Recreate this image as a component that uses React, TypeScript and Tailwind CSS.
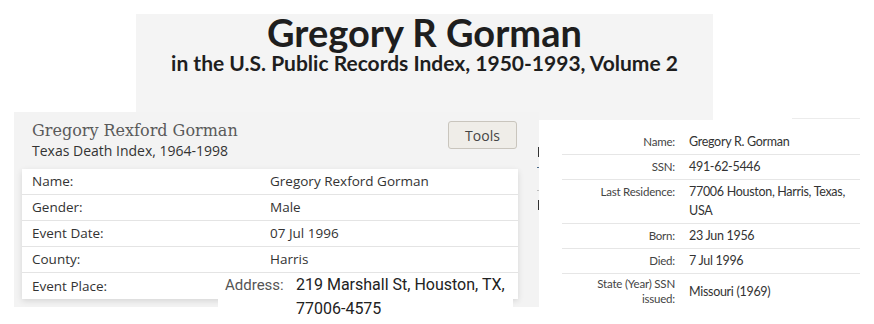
import React from "react";

type Row = { label: string; value: string };

const deathRows: Row[] = [
  { label: "Name:", value: "Gregory Rexford Gorman" },
  { label: "Gender:", value: "Male" },
  { label: "Event Date:", value: "07 Jul 1996" },
  { label: "County:", value: "Harris" },
  { label: "Event Place:", value: "" },
];

const recordRows: { label: string[]; value: string[] }[] = [
  { label: ["Name:"], value: ["Gregory R. Gorman"] },
  { label: ["SSN:"], value: ["491-62-5446"] },
  { label: ["Last Residence:"], value: ["77006 Houston, Harris, Texas,", "USA"] },
  { label: ["Born:"], value: ["23 Jun 1956"] },
  { label: ["Died:"], value: ["7 Jul 1996"] },
];

const TitlePanel = () => (
  <div className="absolute left-[136px] top-[14px] w-[577px] h-[106px] bg-[#f4f4f4] text-center text-[#1e1e1e] font-['Lato',sans-serif] font-bold">
    <div className="text-[38px] leading-[38px] -mt-[1px]">Gregory R Gorman</div>
    <div className="text-[21px] leading-[22px] mt-[1px]">
      in the U.S. Public Records Index, 1950-1993, Volume 2
    </div>
  </div>
);

const DeathIndexPanel = () => (
  <div className="absolute left-[14px] top-[112px] w-[525px] h-[195px] bg-[#f3f3f3] font-['Open_Sans',sans-serif]">
    <div className="flex justify-between pl-[18px] pr-[22px] pt-[9px]">
      <div>
        <div className="font-['DejaVu_Serif',serif] text-[16px] leading-[20px] text-[#5a5a5a]">
          Gregory Rexford Gorman
        </div>
        <div className="text-[14px] leading-[20px] text-[#333]">
          Texas Death Index, 1964-1998
        </div>
      </div>
      <button className="w-[69px] h-[28px] rounded-[3px] border border-[#c9c5bd] bg-[#efede8] text-[14px] text-[#444]">
        Tools
      </button>
    </div>
    <div className="ml-[8px] mt-[8px] w-[496px] bg-white shadow-[0_2px_6px_rgba(0,0,0,0.12)]">
      {deathRows.map((r, i) => (
        <div
          key={r.label}
          className={`flex h-[26px] items-center text-[13.5px] text-[#333] ${
            i < deathRows.length - 1 ? "border-b border-[#e4e4e4]" : ""
          }`}
        >
          <div className="w-[248px] pl-[10px]">{r.label}</div>
          <div>{r.value}</div>
        </div>
      ))}
    </div>
  </div>
);

const RecordPanel = () => (
  <div className="absolute left-[539px] top-[120px] w-[321px] h-[200px] bg-white pt-[10px] font-['Lato',sans-serif]">
    {recordRows.map((r) => (
      <div
        key={r.label[0]}
        className="ml-[23px] flex gap-[14px] border-b border-[#e6e6e6] pt-[2px] pb-[3px]"
      >
        <div className="w-[113px] text-right text-[11.5px] tracking-[-0.2px] leading-[19px] text-[#444]">
          {r.label.map((l) => (
            <div key={l}>{l}</div>
          ))}
        </div>
        <div className="whitespace-nowrap text-[12.5px] tracking-[-0.3px] leading-[19px] text-[#333]">
          {r.value.map((v) => (
            <div key={v}>{v}</div>
          ))}
        </div>
      </div>
    ))}
    <div className="ml-[23px] flex items-center gap-[14px] pt-[2px]">
      <div className="w-[113px] text-right text-[11.5px] tracking-[-0.2px] leading-[15px] text-[#444]">
        <div>State (Year) SSN</div>
        <div>issued:</div>
      </div>
      <div className="text-[12.5px] tracking-[-0.3px] leading-[19px] text-[#333]">Missouri (1969)</div>
    </div>
  </div>
);

const AddressBox = () => (
  <div className="absolute left-[218px] top-[273px] w-[295px] h-[51px] bg-white flex font-['Roboto',sans-serif] leading-[24px]">
    <div className="w-[78px] pl-[7px] text-[15px] text-[#555]">Address:</div>
    <div className="text-[16px] text-[#222]">
      <div>219 Marshall St, Houston, TX,</div>
      <div>77006-4575</div>
    </div>
  </div>
);

export default function App() {
  return (
    <div className="relative w-[874px] h-[324px] overflow-hidden bg-white">
      <TitlePanel />
      <DeathIndexPanel />
      {/* bits of a hidden record peeking out between the two cards */}
      <div className="absolute left-[538px] top-[147px] w-[2px] h-[10px] bg-[#333]" />
      <div className="absolute left-[537px] top-[167px] w-[3px] h-[1px] bg-[#4a6a8a]" />
      <div className="absolute left-[537px] top-[190px] w-[3px] h-[1px] bg-[#bbb]" />
      <div className="absolute left-[538px] top-[200px] w-[2px] h-[10px] bg-[#333]" />
      <RecordPanel />
      <div className="absolute left-[792px] top-[118px] w-[68px] h-[1px] bg-[#ececec]" />
      <AddressBox />
    </div>
  );
}
